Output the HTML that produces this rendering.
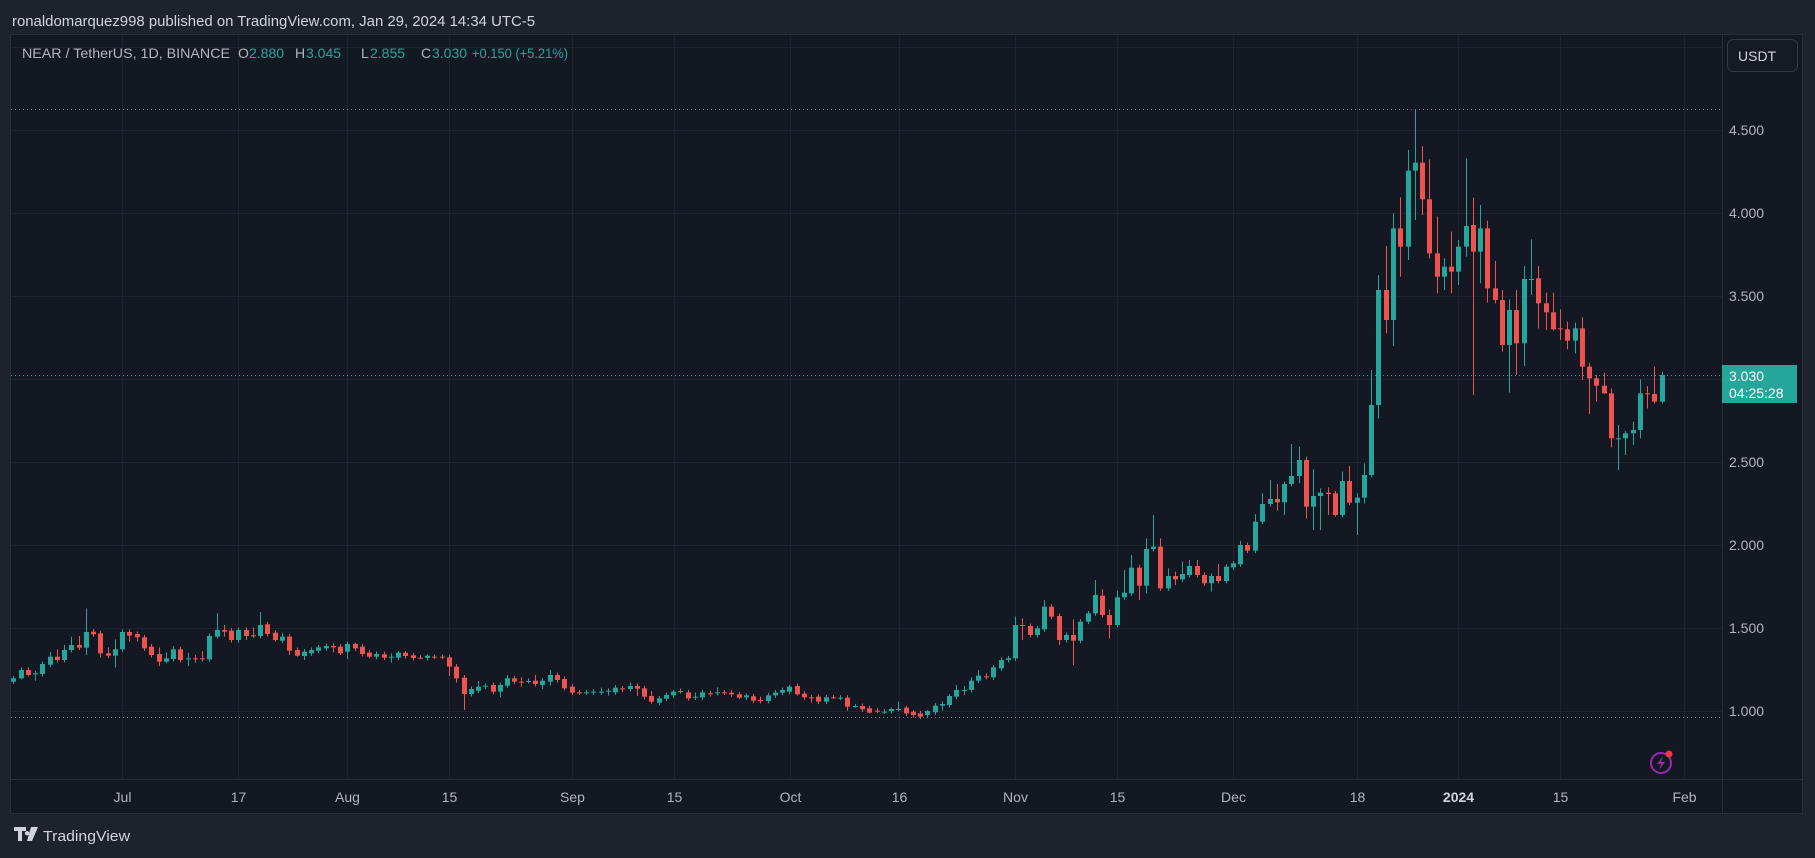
<!DOCTYPE html>
<html><head><meta charset="utf-8">
<style>
html,body{margin:0;padding:0;background:#1e222d;width:1815px;height:858px;overflow:hidden}
svg{display:block}
text{font-family:"Liberation Sans",sans-serif}
</style></head>
<body>
<svg id="s" width="1815" height="858" viewBox="0 0 1815 858" xmlns="http://www.w3.org/2000/svg">
<rect x="0" y="0" width="1815" height="858" fill="#1e222d"/>
<text x="12" y="26" font-size="15" fill="#d1d4dc" textLength="523" lengthAdjust="spacingAndGlyphs">ronaldomarquez998 published on TradingView.com, Jan 29, 2024 14:34 UTC-5</text>
<rect x="10.5" y="34.5" width="1792" height="779" fill="#141823" stroke="#2a2e39"/>
<line x1="1722.5" y1="35" x2="1722.5" y2="813" stroke="#2a2e39"/>
<line x1="10" y1="779.5" x2="1802" y2="779.5" stroke="#2a2e39"/>
<g id="grid" stroke="#1f2330" stroke-width="1"></g>
<line x1="11" y1="109.5" x2="1722" y2="109.5" stroke="#787b86" stroke-dasharray="1 3"/>
<line x1="11" y1="717.5" x2="1722" y2="717.5" stroke="#787b86" stroke-dasharray="1 3"/>
<line x1="11" y1="375.5" x2="1722" y2="375.5" stroke="#26a69a" stroke-dasharray="1 3"/>
<g id="candles"></g>
<text x="22" y="58" font-size="14" fill="#b2b5be" textLength="208" lengthAdjust="spacingAndGlyphs">NEAR / TetherUS, 1D, BINANCE</text>
<text y="58" font-size="14" fill="#b2b5be"><tspan x="238">O</tspan><tspan x="249" fill="#26a69a">2.880</tspan><tspan x="295">H</tspan><tspan x="306" fill="#26a69a">3.045</tspan><tspan x="361">L</tspan><tspan x="370" fill="#26a69a">2.855</tspan><tspan x="421">C</tspan><tspan x="432" fill="#26a69a">3.030</tspan></text>
<text x="472" y="58" font-size="14" fill="#26a69a" textLength="96" lengthAdjust="spacingAndGlyphs">+0.150 (+5.21%)</text>
<rect x="1727.5" y="39.5" width="70" height="32" rx="6" fill="#161a25" stroke="#363a45"/>
<text x="1738" y="61" font-size="14" fill="#d1d4dc">USDT</text>
<g font-size="14" fill="#b2b5be">
<text x="1729" y="135">4.500</text>
<text x="1729" y="218">4.000</text>
<text x="1729" y="301">3.500</text>
<text x="1729" y="467">2.500</text>
<text x="1729" y="550">2.000</text>
<text x="1729" y="633">1.500</text>
<text x="1729" y="716">1.000</text>
</g>
<rect x="1722" y="365" width="75" height="38" fill="#26a69a"/>
<text x="1729" y="381" font-size="14" fill="#ffffff">3.030</text>
<text x="1729" y="398" font-size="14" fill="#ffffff">04:25:28</text>
<g id="tl" font-size="14" fill="#b2b5be" text-anchor="middle"></g>
<circle cx="1661" cy="763" r="10" fill="none" stroke="#9c27b0" stroke-width="2"/>
<path d="M1663 756 L1657 764 L1661 764 L1659 770 L1665 762 L1661 762 Z" fill="#9c27b0"/>
<circle cx="1669" cy="754" r="3.5" fill="#f23645"/>
<path d="M14 827 h12 v4 h-4 v10 h-4 v-10 h-4 z M27 831 a2.2 2.2 0 1 0 0.1 0 z M31 827 h7 l-6 14 h-5 z" fill="#d1d4dc"/>
<text x="43" y="841" font-size="15" fill="#d1d4dc" textLength="87" lengthAdjust="spacingAndGlyphs">TradingView</text>
</svg>
<script>
(function(){
var NS="http://www.w3.org/2000/svg";
function el(p,n,a){var e=document.createElementNS(NS,n);for(var k in a)e.setAttribute(k,a[k]);p.appendChild(e);return e;}
var grid=document.getElementById('grid');
[47,130,213,296,379,462,545,628,711].forEach(function(y){el(grid,'line',{x1:11,x2:1722,y1:y+0.5,y2:y+0.5});});
var step=7.262;function dx(d){return 13.3+(d+15)*step;}
var labels=[["Jul",0],["17",16],["Aug",31],["15",45],["Sep",62],["15",76],["Oct",92],["16",107],["Nov",123],["15",137],["Dec",153],["18",170],["2024",184],["15",198],["Feb",215]];
var tl=document.getElementById('tl');
labels.forEach(function(l){var x=Math.round(dx(l[1]))+0.5;el(grid,'line',{x1:x,x2:x,y1:35,y2:779});
var t=el(tl,'text',{x:x,y:802});if(l[0]=="2024"){t.setAttribute('font-weight','bold');t.setAttribute('fill','#d1d4dc');}t.textContent=l[0];});
var segs=[
{oy:590,x0:13.3,d:[[275,265],[265,240,232,268],[240,255,232,260],[250,250,0,272],[252,222,215,260],[224,200,186,0],[200,210,178,0],[210,180,165,0],[180,165,140,0],[165,173,138,0],[173,126,55,195],[125,133,117,0],[130,190,0,203],[190,197,172,0],[197,178,148,233],[178,126],[126,137,0,155],[132,142,0,155],[142,175],[170,195,162,0],[192,215,172,228],[215,205,187,220],[207,178,168,0],[178,210],[205,205,188,228],[205,205,195,218,1],[205,205,183,215,1],[208,138,0,215],[140,120,70,146],[120,125,105,140],[122,150],[150,120,0,158],[120,138,0,150],[136,136,112,0,1],[138,105,66,0],[103,132],[128,150,0,155],[152,140,128,0],[140,182,0,195],[180,197,0,200],[198,185,0,210],[190,180],[182,172,165,0],[175,168],[168,172,160,187],[170,190,0,195],[185,162,0,207],[162,175,158,0],[170,192],[188,200,0,205],[200,192],[193,203,185,0],[200,200,190,218],[203,188,183,0],[188,198,183,0],[196,204],[203,203,0,208,1],[204,197,193,0],[200,200,193,0,1],[200,200,193,0,1],[202,230,0,258],[230,265,0,278],[263,312,255,360],[312,297],[302,290,273,0],[287,287,280,298],[285,305,0,313],[305,285,0,322],[287,265,255,0],[265,275]]},
{oy:640,x0:520.7,d:[[125,125,112,140,1],[123,123,115,0],[122,132,105,0],[135,122,0,147],[125,105,90,137],[105,120],[117,145,0,152],[140,158],[157,157,0,0,1],[157,157],[155,155,147,165],[155,155,143,165],[152,152,145,167],[157,143],[145,145,138,156,1],[147,138,127,0],[138,146,0,168],[145,170,0,178],[168,185,153,0],[188,175],[176,165,158,0],[166,155,150,0],[153,153,0,0,1],[157,175,0,182],[170,170,158,180],[172,157],[160,160,152,170,1],[157,157,142,167],[157,157,150,165,1],[158,163],[163,173,0,177],[172,166,161,0],[169,182],[180,180,170,190,1],[183,166],[166,158],[158,150,143,0],[155,140,135,0],[138,163,0,167],[161,172],[172,172,0,188,1],[170,185],[185,172],[172,172,165,177,1],[173,173],[173,200,0,212],[198,198,192,203],[198,208],[205,218,0,220],[212,212,0,0,1],[215,215],[213,207,203,0],[207,207,185,0],[203,220,197,0],[215,225,210,0],[220,230],[225,213,210,0],[217,197],[197,192,0,212],[195,168,162,0],[170,150,135,0],[150,150,138,165],[150,122,112,0],[122,107,90,0]]},
{oy:440,x0:986,d:[[709,709,700,718,1],[712,682],[685,660],[660,655],[655,555,530,0],[555,555,535,600,1],[558,585],[585,565],[568,500,480,0],[500,530],[528,600,0,615],[600,585],[585,602,538,675],[602,545],[545,520],[520,465,420,0],[467,525,448,0],[525,555,508,595],[555,472,452,0],[472,458,390,0],[460,383,345,0],[383,437,0,480],[437,327,295,460],[327,320,225,0],[320,445,295,0],[445,408,385,0],[408,418,395,435],[418,402,365,0],[405,378,360,0],[378,405,360,0],[405,430],[430,408,0,455],[408,423,372,0],[423,380],[382,370],[373,315,303,0],[315,332],[332,245,222,0]]},
{oy:100,x0:1262.3,d:[[1265,1212,1180,0],[1212,1197,1140,0],[1197,1207,1152,1232],[1207,1152,0,1245],[1152,1128,1032,0],[1128,1080,1040,1150],[1080,1220,1070,1255],[1220,1188,1108,1290],[1188,1178,1165,1290],[1178,1182,1162,1245],[1180,1245,0,1250],[1245,1143,1115,0],[1143,1208,1098,0],[1208,1193,1180,1305],[1193,1125,1090,1210],[1125,915,810,0],[915,570,525,955],[570,660,438,700],[660,385,340,738],[385,440,292,530],[440,212,150,480],[212,188,28,360],[188,298,138,345],[298,460,178,475],[460,530,350,580],[530,500,475,570],[500,515,395,580],[515,440,420,555],[440,378,175,470],[375,455,293,885],[455,385,315,550],[385,565,362,608],[565,600,483,610],[600,735,570,755],[735,630,598,878],[630,730,570,825],[730,537,498,798],[537,537,418,585],[535,610,498,685],[610,637,578,690],[637,688,578,692],[685,685,628,720,1],[688,722,665,748],[722,685,668,760],[685,800,652,840],[800,835,788,942],[835,857,825,905],[857,880,818,882],[880,1015,865,1042],[1015,1015,975,1110],[1015,1000,992,1065],[1000,990,965,1035],[990,880,838,1015],[880,880,858,925,1],[882,905,800,910],[905,825,815,910]]}
];
var g=document.getElementById('candles');
segs.forEach(function(s){s.d.forEach(function(c,i){
var x=s.x0+i*step;var o=s.oy+c[0]/3,cl=s.oy+c[1]/3;
var top=Math.min(o,cl),bot=Math.max(o,cl);
var h=c[2]?s.oy+c[2]/3:top-2.5,l=c[3]?s.oy+c[3]/3:bot+2.5;
var red=(cl>o)||(c[4]==1&&cl==o);var col=red?'#ef5350':'#26a69a';
var cx=Math.round(x)+0.5;
el(g,'line',{x1:cx,x2:cx,y1:h,y2:l,stroke:col,'stroke-width':1});
var bh=Math.max(bot-top,1);
el(g,'rect',{x:Math.round(x)-2,y:top,width:5,height:bh,fill:col});
});});
})();
</script>
</body></html>
